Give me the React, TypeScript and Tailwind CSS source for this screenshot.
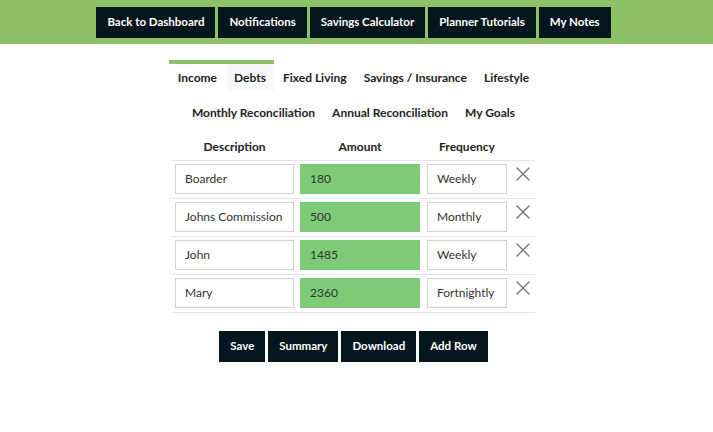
import { X } from "lucide-react"

const navButtons = ["Back to Dashboard", "Notifications", "Savings Calculator", "Planner Tutorials", "My Notes"]
const tabsTop = ["Income", "Debts", "Fixed Living", "Savings / Insurance", "Lifestyle"]
const tabsBottom = ["Monthly Reconciliation", "Annual Reconciliation", "My Goals"]

const rows = [
  { description: "Boarder", amount: "180", frequency: "Weekly" },
  { description: "Johns Commission", amount: "500", frequency: "Monthly" },
  { description: "John", amount: "1485", frequency: "Weekly" },
  { description: "Mary", amount: "2360", frequency: "Fortnightly" },
]

const actions = ["Save", "Summary", "Download", "Add Row"]

export default function App() {
  return (
    <div className="min-h-[432px] bg-white text-[#222] font-['Lato','Noto_Sans',sans-serif]">
      <header className="flex h-[44px] items-center justify-center gap-[3px] bg-[#8cc265] pr-[6px]">
        {navButtons.map((name) => (
          <button
            key={name}
            className="h-[31px] bg-[#04161d] px-[11px] text-[11.5px] font-bold text-white"
          >
            {name}
          </button>
        ))}
      </header>

      <main className="flex flex-col items-center pr-[6px]">
        <nav className="mt-[16px] flex">
          {tabsTop.map((tab, i) => (
            <div
              key={tab}
              className={
                "flex h-[31px] items-center border-t-4 px-[8.5px] text-[12px] font-bold " +
                (i < 2 ? "border-[#8cc265] " : "border-transparent ") +
                (i === 1 ? "bg-[#f6f8f9]" : "")
              }
            >
              {tab}
            </div>
          ))}
        </nav>
        <nav className="mt-[6px] flex">
          {tabsBottom.map((tab) => (
            <div key={tab} className="flex h-[31px] items-center px-[8.5px] text-[12px] font-bold">
              {tab}
            </div>
          ))}
        </nav>

        <table className="mt-[8px] w-[363px] border-collapse text-[12px]">
          <thead>
            <tr className="h-[24px]">
              <th className="w-[125px] pb-[2px] font-bold">Description</th>
              <th className="w-[126px] pb-[2px] font-bold">Amount</th>
              <th className="w-[88px] pb-[2px] font-bold">Frequency</th>
              <th className="w-[24px]"></th>
            </tr>
          </thead>
          <tbody>
            {rows.map((row) => (
              <tr key={row.description} className="h-[38px] border-t border-[#e3e6e8] last:border-b">
                <td className="px-[3px] py-[3px]">
                  <div className="flex h-[30px] items-center border border-[#cfd2d4] px-[9px] text-[#333]">
                    {row.description}
                  </div>
                </td>
                <td className="px-[3px] py-[3px]">
                  <div className="flex h-[30px] items-center border border-[#7cca77] bg-[#7dca77] px-[9px] text-[#333]">
                    {row.amount}
                  </div>
                </td>
                <td className="px-[4px] py-[3px]">
                  <div className="flex h-[30px] items-center border border-[#cfd2d4] px-[9px] text-[#333]">
                    {row.frequency}
                  </div>
                </td>
                <td className="align-top pt-[1px]">
                  <X size={24} strokeWidth={1.4} className="text-[#777]" />
                </td>
              </tr>
            ))}
          </tbody>
        </table>

        <div className="mt-[18px] flex gap-[3px]">
          {actions.map((action) => (
            <button
              key={action}
              className="h-[31px] bg-[#04161d] px-[11px] text-[11.5px] font-bold text-white"
            >
              {action}
            </button>
          ))}
        </div>
      </main>
    </div>
  )
}
